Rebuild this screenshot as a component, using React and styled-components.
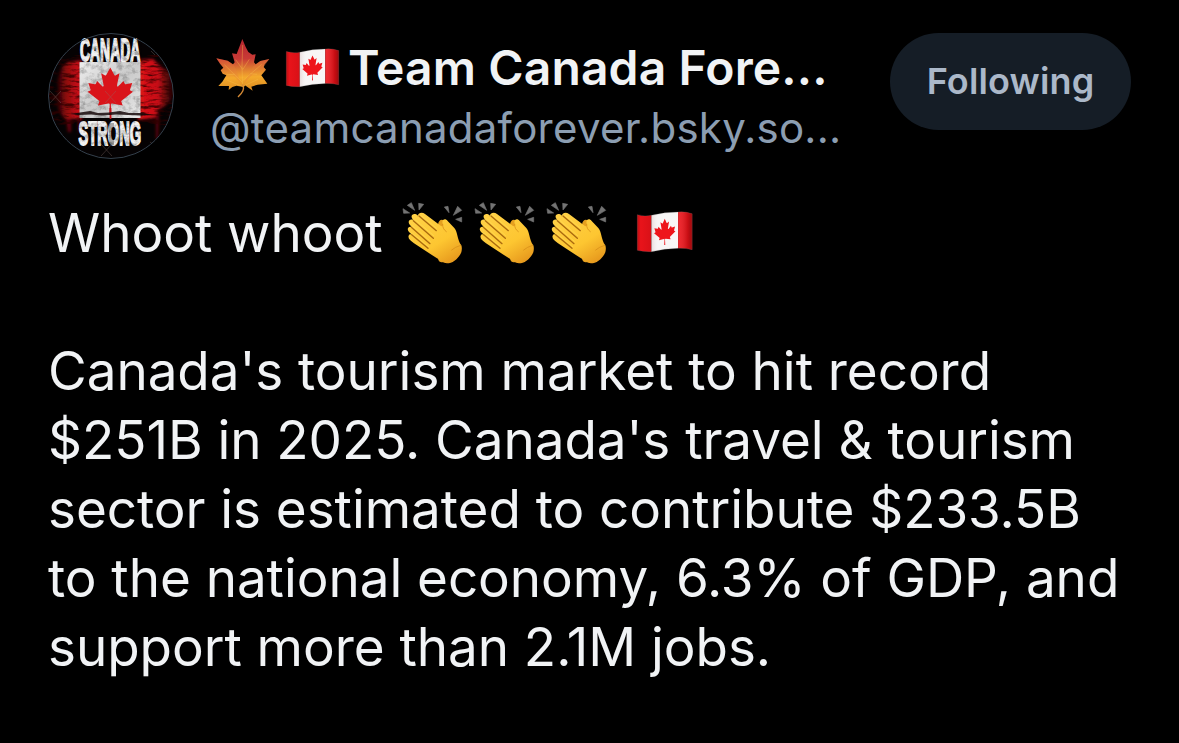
import React from "react";
import styled, { createGlobalStyle } from "styled-components";

const GlobalStyle = createGlobalStyle`
  html, body { margin: 0; background: #000; }
  body { font-family: Inter, "Liberation Sans", sans-serif; }
`;

const Post = styled.article`
  box-sizing: border-box;
  width: 1179px;
  height: 743px;
  padding: 33px 48px 0;
  background: #000;
  color: #f1f3f5;
  overflow: hidden;
`;

const Header = styled.header`
  display: flex;
  align-items: flex-start;
  height: 126px;
`;

const Avatar = styled.svg`
  display: block;
  flex: none;
  width: 126px;
  height: 126px;
  margin-right: 36px;
`;

const Identity = styled.div`
  flex: none;
  width: 680px;
  white-space: nowrap;
`;

const NameRow = styled.div`
  display: flex;
  align-items: center;
  height: 70px;
`;

const Name = styled.span`
  font-size: 48px;
  line-height: 70px;
  font-weight: 600;
  letter-spacing: 0.12px;
`;

const Handle = styled.div`
  font-size: 42px;
  line-height: 50px;
  color: #8c9eb2;
  letter-spacing: 0.25px;
`;

const FollowButton = styled.button`
  flex: none;
  width: 241px;
  height: 97px;
  padding: 0;
  border: 0;
  border-radius: 49px;
  background: #151d26;
  color: #abb8c9;
  font: 600 36px/97px Inter, "Liberation Sans", sans-serif;
  letter-spacing: 0.15px;
`;

const Body = styled.div`
  margin-top: 40px;
  font-size: 53px;
  line-height: 69px;
  letter-spacing: -0.05px;
`;

const Line = styled.div`
  display: flex;
  align-items: center;
  height: 69px;
  white-space: pre;
`;

const Glyph = styled.svg`
  display: block;
  flex: none;
  overflow: visible;
  width: ${(p) => p.$w}px;
  height: ${(p) => p.$h}px;
  margin: ${(p) => p.$m || "0"};
`;

const LEAF =
  "m-90 2030 45-863a95 95 0 0 0-111-98l-859 151 116-320a65 65 0 0 0-20-73l-941-762 212-99a65 65 0 0 0 34-79l-186-572 542 115a65 65 0 0 0 73-38l105-247 423 454a65 65 0 0 0 111-57l-204-1052 327 189a65 65 0 0 0 91-27l332-652 332 652a65 65 0 0 0 91 27l327-189-204 1052a65 65 0 0 0 111 57l423-454 105 247a65 65 0 0 0 73 38l542-115-186 572a65 65 0 0 0 34 79l212 99-941 762a65 65 0 0 0-20 73l116 320-859-151a95 95 0 0 0-111 98l45 863z";

function AvatarPicture() {
  return (
    <Avatar viewBox="0 0 126 126">
      <defs>
        <clipPath id="disc"><circle cx="63" cy="63" r="62.5" /></clipPath>
        <linearGradient id="redL" x1="0" x2="1">
          <stop offset="0" stopColor="#c00c10" stopOpacity="0" />
          <stop offset=".4" stopColor="#b90d12" stopOpacity=".75" />
          <stop offset="1" stopColor="#dc1117" />
        </linearGradient>
        <linearGradient id="redR" x1="0" x2="1">
          <stop offset="0" stopColor="#de1218" />
          <stop offset=".6" stopColor="#c51016" />
          <stop offset="1" stopColor="#8b0c10" stopOpacity=".3" />
        </linearGradient>
        <linearGradient id="panel" x1="0" x2="1" y2="1">
          <stop offset="0" stopColor="#eeeeee" />
          <stop offset=".5" stopColor="#cacaca" />
          <stop offset="1" stopColor="#e8e8e8" />
        </linearGradient>
        <filter id="streaks" x="0" y="0" width="1" height="1">
          <feTurbulence type="fractalNoise" baseFrequency=".07 .3" numOctaves="4" seed="7" />
          <feColorMatrix values="0 0 0 0 .03  0 0 0 0 0  0 0 0 0 0  4 0 0 0 -1.85" />
        </filter>
        <filter id="wear" x="0" y="0" width="1" height="1">
          <feTurbulence type="fractalNoise" baseFrequency=".16 .22" numOctaves="4" seed="4" />
          <feColorMatrix values="0 0 0 0 0  0 0 0 0 0  0 0 0 0 0  3 0 0 0 -1.3" />
        </filter>
        <filter id="soft" x="-.2" y="-.2" width="1.4" height="1.4">
          <feGaussianBlur stdDeviation="1.6" />
        </filter>
      </defs>
      <g clipPath="url(#disc)">
        <rect width="126" height="126" fill="#050203" />
        <g filter="url(#soft)">
          <path d="M14 34 20 29 34 27V86H17L11 79 7 66 10 58 9 48Z" fill="url(#redL)" />
          <path d="M90 27 105 26 114 35 124 39V66L117 73 111 76 107 85 90 87Z" fill="url(#redR)" />
          <path d="M108 80h3l-1 26h-2zM18 85h5v14h-3zM30 86h3v14h-2z" fill="#8e090e" opacity=".7" />
        </g>
        <rect y="22" width="32" height="70" filter="url(#streaks)" opacity=".8" />
        <rect x="92" y="22" width="34" height="70" filter="url(#streaks)" opacity=".8" />
        <rect x="31.5" y="29" width="61" height="56" fill="url(#panel)" />
        <rect x="31.5" y="29" width="61" height="56" filter="url(#wear)" opacity=".22" />
        <g transform="translate(62.3 58) scale(.0122 .0118)"><path d={LEAF} fill="#d9141a" /></g>
        <path d="M61.6 75h1.8v11h-1.8z" fill="#c51218" />
        <path d="M22 81 32 79.5 42 78 50 80 61 79.5 72 78 81 80 93 80 105 82 93 82.5 80 82 69 81.5 54 82.5 43 81.5 31 82Z" fill="#17090a" opacity=".85" />
      </g>
      <g fill="#f1f1f1" stroke="#f1f1f1" strokeWidth="1.3" fontFamily="'Liberation Sans', sans-serif" fontWeight="700" fontSize="12">
        <text transform="translate(32 28) scale(1.16 2.62)" strokeWidth=".7">CANADA</text>
        <text transform="translate(30.5 111.5) scale(1.22 2.75)" strokeWidth=".7">STRONG</text>
      </g>
      <g clipPath="url(#disc)">
        <rect x="30" y="4" width="64" height="25" filter="url(#wear)" opacity=".3" />
        <rect x="30" y="87" width="64" height="26" filter="url(#wear)" opacity=".3" />
        <path d="M61 90h5v22h-5z" fill="#000" opacity=".3" />
        <path d="M2 58 13 70M13 58 2 70M53 111 64 123M64 111 53 123M103 18 107 22M102 109l4 3M57 58l11 12M68 58 57 70" stroke="#89746f" strokeWidth=".7" opacity=".5" />
      </g>
      <circle cx="63" cy="63" r="62.5" fill="none" stroke="#34404c" strokeWidth="1" />
    </Avatar>
  );
}

function MapleLeafEmoji() {
  return (
    <Glyph viewBox="0 0 162 176" $w={54} $h={58.7} $m="1px 0 0 5.5px">
      <defs>
        <linearGradient id="autumn" x1=".5" y1="0" x2=".55" y2="1">
          <stop offset="0" stopColor="#b3252e" />
          <stop offset=".38" stopColor="#c83a36" />
          <stop offset=".57" stopColor="#dd7931" />
          <stop offset=".74" stopColor="#f4a92c" />
          <stop offset="1" stopColor="#dc8b20" />
        </linearGradient>
      </defs>
      <path d="M79 0 89 24 97 39 109 47 119 46 114 70 119 76 133 66 160 60 146 76 143 84 150 92 136 109 154 134 125 137 106 143 110 155 87 139 84 144 61 140 49 144 38 153 39 141 7 141 19 128 31 109 20 104 14 94 22 86 12 74 1 58 35 65 51 76 56 70 48 43 62 45 70 24Z" fill="url(#autumn)" />
      <path d="M1 58 35 65 55 80 76 134 40 96 22 84ZM160 60 133 66 112 82 82 134 120 96 143 84Z" fill="#e9813a" opacity=".35" />
      <path d="M80 142 78 82 80 18M79 126 137 76M79 130 25 77M80 142 126 121M79 142 34 124M80 92 100 61M79 90 59 62M103 104l20 2M56 106l-23 1" fill="none" stroke="#f7bd4a" strokeWidth="2" opacity=".6" />
      <path d="M79 136C87 150 80 160 66 174" fill="none" stroke="#d58a35" strokeWidth="4" />
    </Glyph>
  );
}

function FlagEmoji({ w, h, m }) {
  const id = `fold${Math.round(w)}`;
  return (
    <Glyph viewBox="0 0 166 122" preserveAspectRatio="none" $w={w} $h={h} $m={m}>
      <defs>
        <linearGradient id={id} x1="0" x2="1">
          <stop offset="0" stopColor="#700" stopOpacity=".35" />
          <stop offset=".06" stopColor="#700" stopOpacity="0" />
          <stop offset=".25" stopColor="#600" stopOpacity=".12" />
          <stop offset=".4" stopColor="#fff" stopOpacity="0" />
          <stop offset=".74" stopColor="#fff" stopOpacity=".1" />
          <stop offset=".92" stopColor="#400" stopOpacity=".22" />
          <stop offset="1" stopColor="#300" stopOpacity=".45" />
        </linearGradient>
      </defs>
      <path d="M1 11Q22 17 43 13V121Q20 122 1 117Z" fill="#e8131a" />
      <path d="M43 13Q83 3 123 3V111Q83 112 43 121Z" fill="#f8f6f6" />
      <path d="M123 3Q146 1 165 8V115Q145 110 123 111Z" fill="#ef1219" />
      <path d="M1 11Q22 17 43 13 83 3 123 3 146 1 165 8V115Q145 110 123 111 83 112 43 121 20 122 1 117Z" fill={`url(#${id})`} stroke="#777" strokeOpacity=".45" strokeWidth="1.5" />
      <g transform="translate(83 62) skewY(-5) scale(.0172 .0194)"><path d={LEAF} fill="#ee151b" /></g>
    </Glyph>
  );
}

function ClapEmoji({ m }) {
  return (
    <Glyph viewBox="0 0 177 186" $w={59} $h={62} $m={m}>
      <defs>
        <linearGradient id="skin" x1=".15" y1=".1" x2=".75" y2="1">
          <stop offset="0" stopColor="#ffd045" />
          <stop offset=".6" stopColor="#fdc631" />
          <stop offset="1" stopColor="#e89b1e" />
        </linearGradient>
      </defs>
      <path d="M13 10 25 2 35 25ZM0 20 20 33 2 34ZM47 4 62 7 48 24ZM124 15 135 13 138 32ZM164 13 176 25 151 40ZM158 52 176 46V60Z" fill="#737373" stroke="#737373" strokeWidth="2" />
      <path d="M105 68C107 50 120 50 127 59L137 72 113 91ZM105 160 122 179Q111 184 106 174Z" fill="#e5a01f" />
      <path d="M44 46C43 32 57 29 66 36L111 70C117 75 121 72 119 65 115 51 128 48 134 57L154 78C165 91 162 113 175 130Q178 139 175 151C166 171 149 184 132 184 121 184 112 175 102 169L33 124C22 116 14 109 17 101 19 95 24 96 27 98L18 90C10 82 16 71 26 75L21 69C12 59 20 49 31 54L28 50C20 39 34 30 44 40Z" fill="url(#skin)" />
      <path d="M48 42 100 86M31 56 91 109M25 76 81 125M26 98 75 139" fill="none" stroke="#a9690f" strokeWidth="4" strokeLinecap="round" />
      <path d="M54 40 101 79M35 52 92 101M28 71 82 118M27 93 77 134" fill="none" stroke="#ffdc57" strokeWidth="3" strokeLinecap="round" opacity=".6" />
      <path d="M119 67Q118 81 130 89M146 144Q156 135 173 130" fill="none" stroke="#d58c18" strokeWidth="3" strokeLinecap="round" opacity=".75" />
    </Glyph>
  );
}

export default function App() {
  return (
    <>
      <GlobalStyle />
      <Post>
        <Header>
          <AvatarPicture />
          <Identity>
            <NameRow>
              <MapleLeafEmoji />
              <FlagEmoji w={53} h={39} m="0 9.5px 2px 16px" />
              <Name>Team Canada Fore...</Name>
            </NameRow>
            <Handle>@teamcanadaforever.bsky.so...</Handle>
          </Identity>
          <FollowButton>Following</FollowButton>
        </Header>
        <Body>
          <Line>
            <span>Whoot whoot</span>
            <ClapEmoji m="0 0 2px 20.5px" />
            <ClapEmoji m="0 0 2px 13px" />
            <ClapEmoji m="0 0 2px 13px" />
            <FlagEmoji w={55.5} h={41} m="0 0 4px 31px" />
          </Line>
          <Line />
          <Line>Canada's tourism market to hit record</Line>
          <Line>$251B in 2025. Canada's travel &amp; tourism</Line>
          <Line>sector is estimated to contribute $233.5B</Line>
          <Line>to the national economy, 6.3% of GDP, and</Line>
          <Line>support more than 2.1M jobs.</Line>
        </Body>
      </Post>
    </>
  );
}
